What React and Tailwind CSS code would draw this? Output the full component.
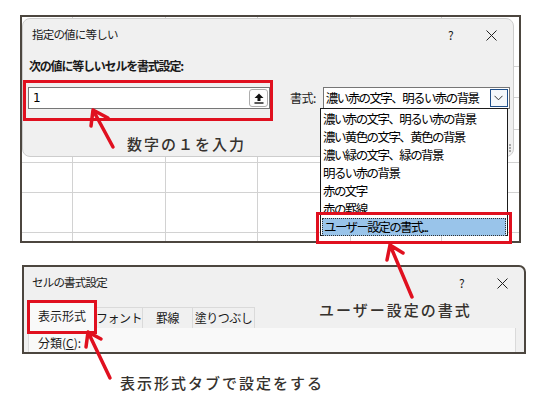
import React from "react";

const ROWS = [50, 31, 32, 33, 30, 40, 20];
const COLS = [51, 93, 92, 93, 91, 80];

const FORMATS = [
  "濃い赤の文字、明るい赤の背景",
  "濃い黄色の文字、黄色の背景",
  "濃い緑の文字、緑の背景",
  "明るい赤の背景",
  "赤の文字",
  "赤の罫線",
];

const CloseIcon = () => (
  <svg width="11" height="11" viewBox="0 0 11 11">
    <path d="M0.5 0.5 L10.5 10.5 M10.5 0.5 L0.5 10.5" stroke="#222" strokeWidth="1" />
  </svg>
);

/** Spreadsheet cells behind the first dialog */
const SheetGrid = () => (
  <div className="flex flex-col">
    {ROWS.map((h, r) => (
      <div key={r} className="flex" style={{ height: h }}>
        {COLS.map((w, c) => (
          <div key={c} className="border-r border-b border-[#d2d2d2] shrink-0" style={{ width: w }} />
        ))}
      </div>
    ))}
  </div>
);

const ConditionDialog = () => (
  <div className="absolute left-0 top-[1px] w-[492px] h-[139px] rounded-[8px] bg-[#f0f0f0] border border-[#cdcdcd]">
    <div className="h-[32px] flex items-center justify-between pl-[9px] pr-[16px] text-[11.5px] tracking-[-0.8px] text-[#1a1a1a]">
      <span>指定の値に等しい</span>
      <div className="flex items-center gap-[33px]">
        <span className="text-[12px]">?</span>
        <CloseIcon />
      </div>
    </div>
    <div className="mt-[5px] h-[20px] flex items-center pl-[6px] text-[12px] font-bold tracking-[-1.2px] text-[#1a1a1a]">
      次の値に等しいセルを書式設定:
    </div>
    <div className="mt-[11px] flex items-center">
      <div className="ml-[5px] w-[242px] h-[22px] bg-white border border-[#767676] flex items-center justify-between pl-[4px] pr-[1px]">
        <span className="font-['DejaVu_Sans',sans-serif] text-[12px] text-black">1</span>
        <div className="w-[19px] h-[18px] rounded-[3px] border border-[#adadad] bg-[#fdfdfd] flex items-center justify-center">
          <svg width="10" height="11" viewBox="0 0 10 11">
            <path d="M5 0.5 L9.5 5 L6.5 5 L6.5 8 L3.5 8 L3.5 5 L0.5 5 Z" fill="#111" />
            <path d="M0.5 10 H9.5" stroke="#111" strokeWidth="1.4" />
          </svg>
        </div>
      </div>
      <span className="ml-[20px] text-[12px] tracking-[-0.5px] text-[#1a1a1a]">書式:</span>
      <div className="ml-[7px] w-[187px] h-[22px] bg-white border border-[#767676] flex items-center justify-between pl-[2px] pr-[1px]">
        <span className="text-[12.5px] tracking-[-1.6px] text-black">濃い赤の文字、明るい赤の背景</span>
        <div className="w-[18px] h-[18px] border border-[#1f4f8a] bg-[#f4f8fc] flex items-center justify-center">
          <svg width="9" height="6" viewBox="0 0 9 6">
            <path d="M0.5 0.8 L4.5 4.8 L8.5 0.8" stroke="#333" strokeWidth="1" fill="none" />
          </svg>
        </div>
      </div>
    </div>
    <div className="absolute right-[2px] bottom-[4px] grid grid-cols-2 gap-[1px]">
      {[0, 1, 2, 3, 4, 5].map((i) => (
        <div key={i} className="w-[2px] h-[2px] bg-[#a8a8a8]" />
      ))}
    </div>
    <div className="absolute left-[297px] top-[89px] w-[188px] h-[128px] bg-white border border-[#1b1b1b] pt-[1px] px-[1px]">
      {FORMATS.map((f) => (
        <div key={f} className="h-[18px] flex items-center pl-[1px] text-[12.5px] tracking-[-1.6px] text-black">
          {f}
        </div>
      ))}
      <div className="h-[18px] flex items-center pl-[1px] bg-[#99c4ea] border border-dotted border-[#333] text-[12.5px] tracking-[-1.6px] text-black">
        ユーザー設定の書式...
      </div>
    </div>
  </div>
);

const TopShot = () => (
  <div className="relative w-[501px] h-[228px] border-2 border-[#4c463f] bg-white">
    <div className="overflow-hidden h-full">
      <SheetGrid />
    </div>
    <ConditionDialog />
  </div>
);

const TABS = [
  { label: "フォント", w: "w-[47px]" },
  { label: "罫線", w: "w-[50px]" },
  { label: "塗りつぶし", w: "w-[62px]" },
];

const BottomShot = () => (
  <div className="w-[504px] h-[89px] border-2 border-[#4c463f] rounded-tr-[7px] bg-[#f0f0f0] overflow-hidden">
    <div className="h-[32px] flex items-center justify-between pl-[8px] pr-[16px] text-[11.5px] tracking-[-0.8px] text-[#1a1a1a]">
      <span>セルの書式設定</span>
      <div className="flex items-center gap-[33px]">
        <span className="text-[12px]">?</span>
        <CloseIcon />
      </div>
    </div>
    <div className="mt-[3px] pl-[4px] flex items-end h-[26px]">
      <div className="w-[68px] h-[26px] bg-[#f9f9f9] border border-b-0 border-[#dadada] flex items-center justify-center text-[12px] text-[#1a1a1a]">
        表示形式
      </div>
      {TABS.map((t) => (
        <div
          key={t.label}
          className={`${t.w} h-[21px] border-t border-r border-[#dadada] flex items-center justify-center text-[12px] tracking-[-0.5px] text-[#1a1a1a]`}
        >
          {t.label}
        </div>
      ))}
    </div>
    <div className="ml-[4px] w-[488px] h-[40px] bg-[#f9f9f9] border border-t-0 border-[#dadada] pl-[9px] pt-[6px] text-[12px] text-[#1a1a1a]">
      分類(<span className="underline">C</span>):
    </div>
  </div>
);

const Note = ({ className, children }) => (
  <span className={`absolute text-[15px] leading-[18px] tracking-[2px] font-medium text-[#36322e] whitespace-nowrap ${className}`}>
    {children}
  </span>
);

const Arrows = () => (
  <svg className="absolute inset-0 pointer-events-none" width="548" height="411" viewBox="0 0 548 411">
    <g stroke="#e0101f" strokeWidth="3.5" strokeLinecap="round" fill="none">
      <path d="M113 147 L93 110 M93 110 L91 126 M93 110 L108 118" />
      <path d="M412 297 L390 245 M390 245 L387 260 M390 245 L403 253" />
      <path d="M110 378 L88 332 M88 332 L86 347 M88 332 L101 339" />
    </g>
  </svg>
);

export default function App() {
  return (
    <div className="relative w-[548px] h-[411px] bg-white overflow-hidden font-['Noto_Sans_CJK_JP','Noto_Sans',sans-serif]">
      <div className="pt-[15px] pl-[20px]">
        <TopShot />
      </div>
      <div className="pt-[22px] pl-[22px]">
        <BottomShot />
      </div>

      {/* red highlight boxes */}
      <div className="absolute left-[23px] top-[80px] w-[250px] h-[41px] border-[3px] border-[#e0101f]" />
      <div className="absolute left-[316px] top-[212px] w-[196px] h-[32px] border-[3px] border-[#e0101f]" />
      <div className="absolute left-[27px] top-[300px] w-[70px] h-[34px] border-[3px] border-[#e0101f]" />

      <Note className="left-[127px] top-[135px]">数字の１を入力</Note>
      <Note className="left-[319px] top-[301px]">ユーザー設定の書式</Note>
      <Note className="left-[120px] top-[374px]">表示形式タブで設定をする</Note>

      <Arrows />
    </div>
  );
}
